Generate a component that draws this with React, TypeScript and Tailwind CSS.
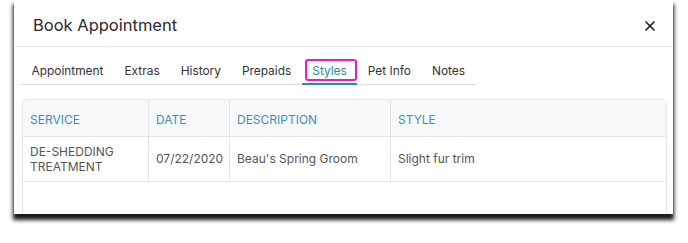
import React from 'react';
import { X } from 'lucide-react';

export default function App() {
  const tabs = ['Appointment', 'Extras', 'History', 'Prepaids', 'Styles', 'Pet Info', 'Notes'];
  const active = 'Styles';
  const columns = ['Service', 'Date', 'Description', 'Style'];
  const rows = [
    { service: 'DE-SHEDDING TREATMENT', date: '07/22/2020', description: "Beau's Spring Groom", style: 'Slight fur trim' },
  ];

  return (
    <div className="w-[688px] h-[243px] overflow-hidden bg-white" style={{ fontFamily: 'Inter, "Noto Sans", sans-serif' }}>
      <div className="ml-[14px] w-[659px] h-[214px] bg-white shadow-[0_5px_4px_1px_rgba(0,0,0,0.9)] flex flex-col overflow-hidden">
        {/* header */}
        <div className="h-[47px] shrink-0 flex items-center justify-between pl-[19px] pr-[15px] pt-[6px] border-b border-[#e6e6e6]">
          <h2 className="text-[16.5px] text-[#2b2b2b] leading-none pb-[2px]">Book Appointment</h2>
          <X className="h-[16px] w-[16px] text-[#222]" strokeWidth={2.6} />
        </div>

        {/* tabs */}
        <div className="pl-[7px]">
          <div className="inline-flex border-b border-[#dcdcdc]">
            {tabs.map((tab) => {
              const isActive = tab === active;
              return (
                <div
                  key={tab}
                  className={`relative h-[37px] px-[10.5px] flex items-center pt-[10px] text-[11.9px] ${
                    isActive ? 'text-[#2e8aa6]' : 'text-[#333]'
                  }`}
                >
                  {tab}
                  {isActive && (
                    <>
                      <span className="absolute left-0 right-0 -bottom-px h-[2px] bg-[#2e8aa6]" />
                      <span className="absolute left-[3px] right-0 top-[12px] h-[22px] rounded-[3px] border-2 border-[#e61ec9]" />
                    </>
                  )}
                </div>
              );
            })}
          </div>
        </div>

        {/* table */}
        <div className="mt-[14px] ml-[8px] w-[645px] h-[140px] shrink-0 rounded-md border border-[#e3e5e9] overflow-hidden">
          <div className="grid grid-cols-[126px_81px_161px_1fr] h-[37px] bg-[#f7f8fa] border-b border-[#e3e5e9]">
            {columns.map((col, idx) => (
              <div
                key={col}
                className={`px-[7px] flex items-center pt-[3px] text-[12px] uppercase text-[#3b92ad] ${
                  idx < columns.length - 1 ? 'border-r border-[#e3e5e9]' : ''
                }`}
              >
                {col}
              </div>
            ))}
          </div>
          {rows.map((row) => (
            <div key={row.service} className="grid grid-cols-[126px_81px_161px_1fr] h-[45px] border-b border-[#e3e5e9] text-[12px] text-[#555]">
              <div className="px-[7px] flex items-center leading-[15px] border-r border-[#e3e5e9]">{row.service}</div>
              <div className="px-[7px] flex items-center border-r border-[#e3e5e9]">{row.date}</div>
              <div className="px-[7px] flex items-center border-r border-[#e3e5e9]">{row.description}</div>
              <div className="px-[7px] flex items-center">{row.style}</div>
            </div>
          ))}
        </div>
      </div>
    </div>
  );
}
